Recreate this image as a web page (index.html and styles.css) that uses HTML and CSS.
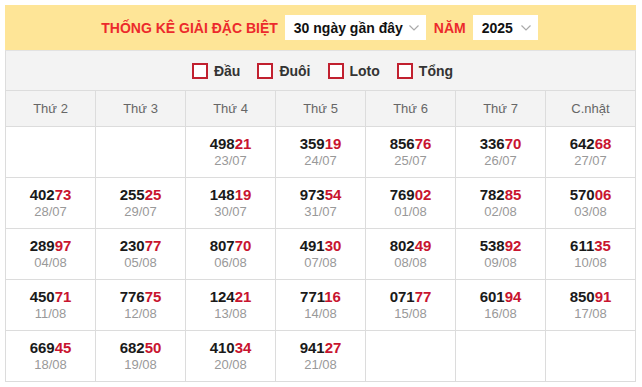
FILE: index.html
```html
<!DOCTYPE html>
<html lang="vi">
<head>
<meta charset="utf-8">
<link rel="stylesheet" href="styles.css">
</head>
<body>
<div class="wrap">
  <div class="bar">
    <span class="title">THỐNG KÊ GIẢI ĐẶC BIỆT</span>
    <div class="select sel-days"><span>30 ngày gần đây</span><svg class="chev" width="10" height="6" viewBox="0 0 10 6"><path d="M0.5 0.5 L5 5 L9.5 0.5" fill="none" stroke="#aaa" stroke-width="1.2"/></svg></div>
    <span class="title nam">NĂM</span>
    <div class="select sel-year"><span>2025</span><svg class="chev" width="10" height="6" viewBox="0 0 10 6"><path d="M0.5 0.5 L5 5 L9.5 0.5" fill="none" stroke="#aaa" stroke-width="1.2"/></svg></div>
  </div>
  <div class="checks">
    <label class="chk"><span class="box"></span>Đầu</label>
    <label class="chk"><span class="box"></span>Đuôi</label>
    <label class="chk"><span class="box"></span>Loto</label>
    <label class="chk"><span class="box"></span>Tổng</label>
  </div>
  <table class="grid">
    <thead>
      <tr><th>Thứ 2</th><th>Thứ 3</th><th>Thứ 4</th><th>Thứ 5</th><th>Thứ 6</th><th>Thứ 7</th><th>C.nhật</th></tr>
    </thead>
    <tbody>
      <tr>
        <td></td><td></td>
        <td><div class="num">498<em>21</em></div><div class="date">23/07</div></td>
        <td><div class="num">359<em>19</em></div><div class="date">24/07</div></td>
        <td><div class="num">856<em>76</em></div><div class="date">25/07</div></td>
        <td><div class="num">336<em>70</em></div><div class="date">26/07</div></td>
        <td><div class="num">642<em>68</em></div><div class="date">27/07</div></td>
      </tr>
      <tr>
        <td><div class="num">402<em>73</em></div><div class="date">28/07</div></td>
        <td><div class="num">255<em>25</em></div><div class="date">29/07</div></td>
        <td><div class="num">148<em>19</em></div><div class="date">30/07</div></td>
        <td><div class="num">973<em>54</em></div><div class="date">31/07</div></td>
        <td><div class="num">769<em>02</em></div><div class="date">01/08</div></td>
        <td><div class="num">782<em>85</em></div><div class="date">02/08</div></td>
        <td><div class="num">570<em>06</em></div><div class="date">03/08</div></td>
      </tr>
      <tr>
        <td><div class="num">289<em>97</em></div><div class="date">04/08</div></td>
        <td><div class="num">230<em>77</em></div><div class="date">05/08</div></td>
        <td><div class="num">807<em>70</em></div><div class="date">06/08</div></td>
        <td><div class="num">491<em>30</em></div><div class="date">07/08</div></td>
        <td><div class="num">802<em>49</em></div><div class="date">08/08</div></td>
        <td><div class="num">538<em>92</em></div><div class="date">09/08</div></td>
        <td><div class="num">611<em>35</em></div><div class="date">10/08</div></td>
      </tr>
      <tr>
        <td><div class="num">450<em>71</em></div><div class="date">11/08</div></td>
        <td><div class="num">776<em>75</em></div><div class="date">12/08</div></td>
        <td><div class="num">124<em>21</em></div><div class="date">13/08</div></td>
        <td><div class="num">771<em>16</em></div><div class="date">14/08</div></td>
        <td><div class="num">071<em>77</em></div><div class="date">15/08</div></td>
        <td><div class="num">601<em>94</em></div><div class="date">16/08</div></td>
        <td><div class="num">850<em>91</em></div><div class="date">17/08</div></td>
      </tr>
      <tr>
        <td><div class="num">669<em>45</em></div><div class="date">18/08</div></td>
        <td><div class="num">682<em>50</em></div><div class="date">19/08</div></td>
        <td><div class="num">410<em>34</em></div><div class="date">20/08</div></td>
        <td><div class="num">941<em>27</em></div><div class="date">21/08</div></td>
        <td></td><td></td><td></td>
      </tr>
    </tbody>
  </table>
</div>
</body>
</html>
```
FILE: styles.css
```css
* { box-sizing: border-box; }
html, body { margin: 0; padding: 0; background: #fff; }
body { font-family: "Liberation Sans", Arial, sans-serif; }
.wrap { margin: 5px 0 0 5px; width: 631px; }
.bar {
  height: 45px;
  background: #fee597;
  display: flex;
  align-items: center;
  justify-content: center;
  gap: 7px;
  padding-right: 2px;
}
.title { color: #ec2a2c; font-weight: bold; font-size: 14px; }
.nam { margin-left: 1px; }
.select {
  background: #fff;
  height: 25px;
  display: flex;
  align-items: center;
  justify-content: space-between;
  padding: 0 7px 0 9px;
  font-weight: bold;
  font-size: 14px;
  color: #111;
}
.sel-days { width: 141px; }
.sel-year { width: 65px; }
.chev { display: block; }
.checks {
  height: 40px;
  background: #f3f3f3;
  border-left: 1px solid #ddd;
  border-right: 1px solid #ddd;
  border-top: 1px solid #e2e2e2;
  display: flex;
  align-items: center;
  justify-content: center;
  gap: 17px;
  padding-left: 4px;
}
.chk {
  display: flex;
  align-items: center;
  gap: 6px;
  font-weight: bold;
  font-size: 14px;
  color: #333;
}
.box {
  width: 16px;
  height: 16px;
  border: 2px solid #c1202f;
  background: #fff;
}
.grid {
  width: 631px;
  border-collapse: collapse;
  table-layout: fixed;
}
.grid th, .grid td {
  border: 1px solid #dcdcdc;
  text-align: center;
  padding: 0;
}
.grid th {
  height: 36px;
  background: #f3f3f3;
  font-weight: normal;
  font-size: 13px;
  color: #666;
}
.grid td { height: 51px; background: #fff; }
.num {
  font-weight: bold;
  font-size: 15px;
  color: #1a1a1a;
  line-height: 16px;
}
.num em { font-style: normal; color: #c8142f; }
.date {
  font-size: 13px;
  color: #999;
  line-height: 17px;
}
```
